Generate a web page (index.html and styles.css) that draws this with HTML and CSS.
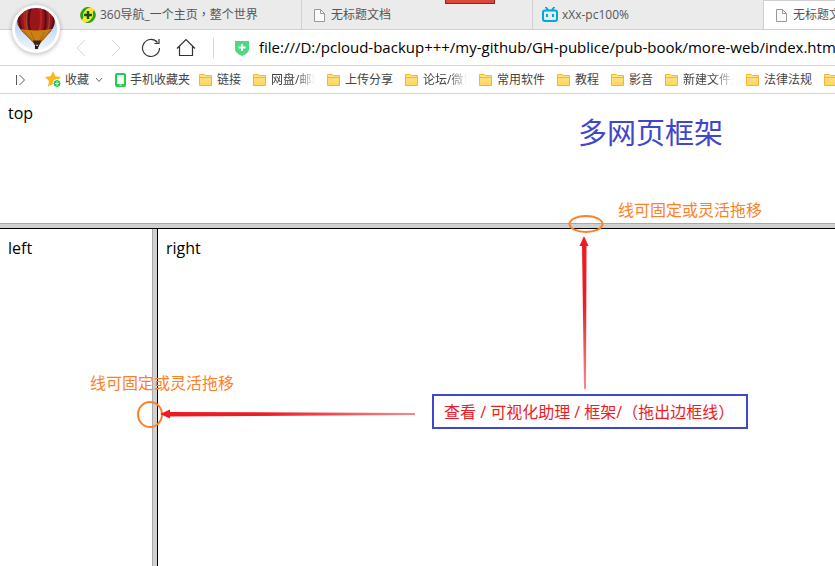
FILE: index.html
```html
<!DOCTYPE html>
<html lang="zh-CN">
<head>
<meta charset="utf-8">
<title>无标题文档</title>
<link rel="stylesheet" href="styles.css">
</head>
<body>
<svg class="defs" aria-hidden="true">
  <defs>
    <linearGradient id="folder-fill" x1="0" y1="0" x2="0" y2="1"><stop offset="0" stop-color="#ffe78c"/><stop offset="1" stop-color="#ffd45c"/></linearGradient>
  </defs>
  <symbol id="folder" viewBox="0 0 13 12">
    <path d="M.5 11.500V.5H5.500L6.500 1.500H12.500V11.500Z" fill="url(#folder-fill)" stroke="#f9b233"/>
    <path d="M1 3.500H12" stroke="#f9b233"/>
  </symbol>
  <symbol id="page" viewBox="0 0 16 16">
    <path d="M3.500 2.500H9.500L13.500 6.500V14.500H3.500Z" fill="#fafafa" stroke="#999"/>
    <path d="M9.500 2.500V6.500H13.500" fill="none" stroke="#999"/>
  </symbol>
</svg>
<div class="browser">
  <header class="chrome">
    <button class="avatar" aria-label="用户">
      <svg viewBox="0 0 40 40" width="42" height="42">
        <defs>
          <linearGradient id="sky" x1="0" y1="0" x2="0" y2="1"><stop offset="0" stop-color="#8ab9ec"/><stop offset=".6" stop-color="#cfe2f7"/><stop offset="1" stop-color="#eef5fc"/></linearGradient>
          <clipPath id="disc"><circle cx="20" cy="20" r="20"/></clipPath>
          <clipPath id="balloon"><path d="M2 13C2 4 10-1 20-1S38 4 38 13C38 20 29 27 23 35H19C13 27 2 20 2 13Z"/></clipPath>
        </defs>
        <g clip-path="url(#disc)">
          <rect width="40" height="40" fill="url(#sky)"/>
          <g clip-path="url(#balloon)">
            <rect width="40" height="40" fill="#98161a"/>
            <path d="M5 0Q2 12 8 25M15 0Q11 12 15 25M28 0Q31 12 27 25M36 0Q39 12 33 25" fill="none" stroke="#5c0c18" stroke-width="2"/>
            <path d="M10 0Q7 12 12 25M24 0Q26 12 23 25" fill="none" stroke="#bb2421" stroke-width="2"/>
            <path d="M12 0Q9 12 13 25M31 0Q35 12 30 25" fill="none" stroke="#96502d"/>
            <path d="M0 19Q20 24 40 19V40H0Z" fill="#c9820f"/>
            <path d="M8 22L19 34M15 23L20 34M28 23L22 34M34 21L23 34" stroke="#a8661a"/>
            <path d="M17 31H25L23 36H19Z" fill="#3b2419"/>
          </g>
          <path d="M19 34L20 37M23 34L22 37" stroke="#222"/>
          <rect x="19" y="36" width="3" height="3" fill="#231a18"/>
        </g>
      </svg>
    </button>
    <span class="marker"></span>
    <nav class="tabs" aria-label="标签页">
      <a class="tab" href="#">
        <svg viewBox="0 0 16 16" width="16" height="16"><circle cx="8" cy="8" r="8" fill="#fbe31d"/><path d="M2 13A8 8 0 0 1 11 .6Q5 1 4.500 6Q4 10 2 13Z" fill="#279c2b"/><path d="M14 3A8 8 0 0 1 5 15.400Q11 15 11.500 10Q12 6 14 3Z" fill="#279c2b"/><circle cx="8" cy="8" r="5" fill="#eef32d"/><path d="M8 4V12M4 8H12" stroke="#174f16" stroke-width="2.500"/></svg>
        <span>360导航_一个主页<span class="centered-mark" lang="zh-TW">，</span>整个世界</span>
      </a>
      <a class="tab" href="#"><svg width="16" height="16"><use href="#page"/></svg><span>无标题文档</span></a>
      <a class="tab" href="#">
        <svg viewBox="0 0 16 16" width="16" height="16" fill="none" stroke="#05a5dd" stroke-width="2"><path d="M4 .5L6 3M12 .5L10 3" stroke-linecap="round"/><rect x="1" y="3.500" width="14" height="10.500" rx="2"/><path d="M5 7V10M11 7V10"/></svg>
        <span>xXx-pc100%</span>
      </a>
      <a class="tab active" href="#" aria-current="page"><svg width="16" height="16"><use href="#page"/></svg><span>无标题文档</span></a>
    </nav>
    <div class="toolbar">
      <button class="tool" aria-label="后退"><svg viewBox="0 0 20 20" width="20" height="20" fill="none" stroke="#dadada"><path d="M14 2L6 10L14 18"/></svg></button>
      <button class="tool" aria-label="前进"><svg viewBox="0 0 20 20" width="20" height="20" fill="none" stroke="#dadada"><path d="M6 2L14 10L6 18"/></svg></button>
      <button class="tool" aria-label="刷新"><svg viewBox="0 0 20 20" width="20" height="20" fill="none" stroke="#333" stroke-width="1.200"><path d="M18.500 10A8.500 8.500 0 1 1 16.500 4.500M18 1V5.500H13.500"/></svg></button>
      <button class="tool" aria-label="主页"><svg viewBox="0 0 20 20" width="20" height="20" fill="none" stroke="#333" stroke-width="1.200"><path d="M1 10.500L10 1.500L19 10.500M3.500 8.500V17.500H16.500V8.500"/></svg></button>
      <span class="divider"></span>
      <svg class="shield" viewBox="0 0 14 16" width="14" height="16"><path d="M0 1H14V9Q14 13 7 16Q0 13 0 9Z" fill="#4bd982"/><path d="M7 4V11M3.500 7.500H10.500" stroke="#fff" stroke-width="2"/></svg>
      <input class="address" type="text" aria-label="地址" value="file:///D:/pcloud-backup+++/my-github/GH-publice/pub-book/more-web/index.html">
    </div>
    <nav class="bookmarks" aria-label="收藏栏">
      <button class="expand" aria-label="展开"><svg viewBox="0 0 10 12" width="10" height="12" fill="none" stroke="#555"><path d="M1.500 1V11M4.500 1L9.500 6L4.500 11"/></svg></button>
      <button class="favorites">
        <svg viewBox="0 0 17 17" width="17" height="17"><path d="M8 0L10.400 5.200L16 6L12 10L13 15.500L8 13L3 15.500L4 10L0 6L5.600 5.200Z" fill="#fdb61b"/><circle cx="12" cy="12.500" r="4" fill="#25c65a" stroke="#fff"/><path d="M12 10.500V14.500M10 12.500H14" stroke="#fff"/></svg>
        <span>收藏</span>
        <svg class="caret" viewBox="0 0 8 6" width="8" height="6" fill="none" stroke="#666"><path d="M1 1L4 4.500L7 1"/></svg>
      </button>
      <a class="phone" href="#"><svg viewBox="0 0 11 14" width="11" height="14"><rect x="1" y="1" width="9" height="12" rx="1" fill="#effff3" stroke="#22cd4b" stroke-width="2"/><path d="M1 12H10" stroke="#22cd4b" stroke-width="2"/><path d="M4.500 12H6.500" stroke="#fff"/></svg><span>手机收藏夹</span></a>
      <a class="mark" href="#"><svg width="13" height="12"><use href="#folder"/></svg><span>链接</span></a>
      <a class="mark" href="#"><svg width="13" height="12"><use href="#folder"/></svg><span class="clipped">网盘/邮箱</span></a>
      <a class="mark" href="#"><svg width="13" height="12"><use href="#folder"/></svg><span>上传分享</span></a>
      <a class="mark" href="#"><svg width="13" height="12"><use href="#folder"/></svg><span class="clipped">论坛/微博</span></a>
      <a class="mark" href="#"><svg width="13" height="12"><use href="#folder"/></svg><span>常用软件</span></a>
      <a class="mark" href="#"><svg width="13" height="12"><use href="#folder"/></svg><span>教程</span></a>
      <a class="mark" href="#"><svg width="13" height="12"><use href="#folder"/></svg><span>影音</span></a>
      <a class="mark" href="#"><svg width="13" height="12"><use href="#folder"/></svg><span class="clipped wide">新建文件夹</span></a>
      <a class="mark" href="#"><svg width="13" height="12"><use href="#folder"/></svg><span>法律法规</span></a>
      <a class="mark" href="#" aria-label="收藏文件夹"><svg width="13" height="12"><use href="#folder"/></svg></a>
    </nav>
  </header>
  <main class="frames">
    <section class="frame top">top</section>
    <div class="splitter horizontal"></div>
    <div class="lower">
      <section class="frame left">left</section>
      <div class="splitter vertical"></div>
      <section class="frame right">right</section>
    </div>
    <svg class="drawing" width="835" height="472" viewBox="0 0 835 472" aria-hidden="true">
      <defs>
        <linearGradient id="fade-x" gradientUnits="userSpaceOnUse" x1="170" y1="0" x2="415" y2="0"><stop offset=".4" stop-color="#ed1c24"/><stop offset="1" stop-color="#f58b8f"/></linearGradient>
        <linearGradient id="fade-y" gradientUnits="userSpaceOnUse" x1="0" y1="150" x2="0" y2="295"><stop offset=".4" stop-color="#ed1c24"/><stop offset="1" stop-color="#f58b8f"/></linearGradient>
      </defs>
      <g fill="none" stroke="#ff7f27" stroke-width="2"><ellipse cx="586" cy="130" rx="16.500" ry="8"/><ellipse cx="150" cy="320.500" rx="12" ry="12.500"/></g>
      <path d="M582 151H586.500L586 295H584Z" fill="url(#fade-y)"/>
      <path d="M584 142L588.500 152H579.500Z" fill="#ed1c24"/>
      <path d="M169 318V322.500L415 321V319Z" fill="url(#fade-x)"/>
      <path d="M160 320L170 315.500V324.500Z" fill="#ed1c24"/>
    </svg>
    <h1 class="note title">多网页框架</h1>
    <p class="note drag-row">线可固定或灵活拖移</p>
    <p class="note drag-column">线可固定或灵活拖移</p>
    <p class="note boxed">查看 / 可视化助理 / 框架/<span class="centered-mark" lang="zh-TW">（</span>拖出边框线<span class="centered-mark" lang="zh-TW">）</span></p>
  </main>
</div>
</body>
</html>
```
FILE: styles.css
```css
* { box-sizing: border-box; }
body {
  margin: 0;
  background: #fff;
  color: #000;
  font-family: "Open Sans", "Noto Sans CJK SC", sans-serif;
  font-size: 16px;
  overflow: hidden;
}
button { border: 0; padding: 0; background: none; font: inherit; color: inherit; }
a { color: inherit; text-decoration: none; }
svg { flex: none; }
.defs { position: absolute; width: 0; height: 0; }
.centered-mark { font-family: "Noto Sans CJK TC", sans-serif; line-height: 1; }
.browser { display: flex; flex-direction: column; height: 100vh; }
.chrome { position: relative; flex: none; }
.avatar {
  position: absolute;
  left: 12px;
  top: 5px;
  width: 48px;
  height: 48px;
  display: grid;
  place-items: center;
  border-radius: 50%;
  background: #fff;
  box-shadow: 0 1px 5px rgba(0, 0, 0, .3);
}
.marker {
  position: absolute;
  left: 445px;
  top: 0;
  width: 50px;
  height: 4px;
  background: #d9483b;
  border: 1px solid #7d2a22;
  border-top: 0;
}
.tabs {
  display: flex;
  height: 30px;
  padding-left: 71px;
  background: #ebebeb;
  border-bottom: 1px solid #d0d0d0;
  overflow: hidden;
}
.tab {
  flex: none;
  display: flex;
  align-items: center;
  gap: 4px;
  width: 231px;
  padding-left: 9px;
  font-size: 12px;
  line-height: 18px;
  color: #555;
  white-space: nowrap;
  border-right: 1px solid #d0d0d0;
}
.tab.active { background: #fff; height: 30px; box-shadow: inset 0 1px #d0d0d0; }
.toolbar {
  display: flex;
  align-items: center;
  height: 36px;
  padding-left: 71px;
  border-bottom: 1px solid #d4d4d4;
}
.tool { flex: none; width: 20px; height: 20px; margin-right: 15px; }
.tool svg { display: block; }
.divider { flex: none; width: 1px; height: 20px; margin-left: 2px; background: #d8d8d8; }
.shield { margin-left: 21px; }
.address {
  flex: 1;
  min-width: 0;
  height: 28px;
  margin-left: 10px;
  padding: 0 0 1px;
  border: 0;
  outline: 0;
  background: none;
  font: 15px "Open Sans", sans-serif;
  color: #000;
}
.bookmarks {
  display: flex;
  align-items: center;
  height: 28px;
  padding-left: 15px;
  border-bottom: 1px solid #d4d4d4;
  font-size: 12px;
  line-height: 18px;
  color: #444;
  white-space: nowrap;
  overflow: hidden;
}
.expand { flex: none; display: flex; margin-right: 20px; }
.favorites { flex: none; display: flex; align-items: center; gap: 3px; margin-right: 12px; }
.caret { margin-left: 3px; }
.phone, .mark { flex: none; display: flex; align-items: center; gap: 5px; }
.phone { gap: 4px; margin-right: 9px; }
.mark { margin-right: 12px; }
.clipped {
  width: 44px;
  overflow: hidden;
  -webkit-mask-image: linear-gradient(to right, #000 60%, transparent);
  mask-image: linear-gradient(to right, #000 60%, transparent);
}
.clipped.wide { width: 51px; }
.frames { position: relative; flex: 1; min-height: 0; display: flex; flex-direction: column; }
.frame { padding: 8px; line-height: 22px; }
.top { flex: none; height: 129px; }
.lower { flex: 1; display: flex; min-height: 0; }
.left { width: 152px; }
.right { flex: 1; }
.splitter { flex: none; background: #d0d0d0; }
.horizontal { height: 6px; border-top: 1px solid #a9a9a9; border-bottom: 1px solid #000; }
.vertical { width: 6px; border-left: 1px solid #a9a9a9; border-right: 1px solid #000; }
.drawing { position: absolute; left: 0; top: 0; }
.note { position: absolute; margin: 0; white-space: nowrap; font-weight: 400; line-height: 24px; }
.title { left: 578px; top: 19px; font-size: 29px; line-height: 40px; color: #3f48cc; }
.drag-row { left: 618px; top: 104px; color: #ff7f27; }
.drag-column { left: 90px; top: 277px; color: #ff7f27; }
.boxed { left: 432px; top: 300px; padding: 4px 12px 3px 10px; border: 2px solid #3f48cc; color: #ed1c24; }
```
